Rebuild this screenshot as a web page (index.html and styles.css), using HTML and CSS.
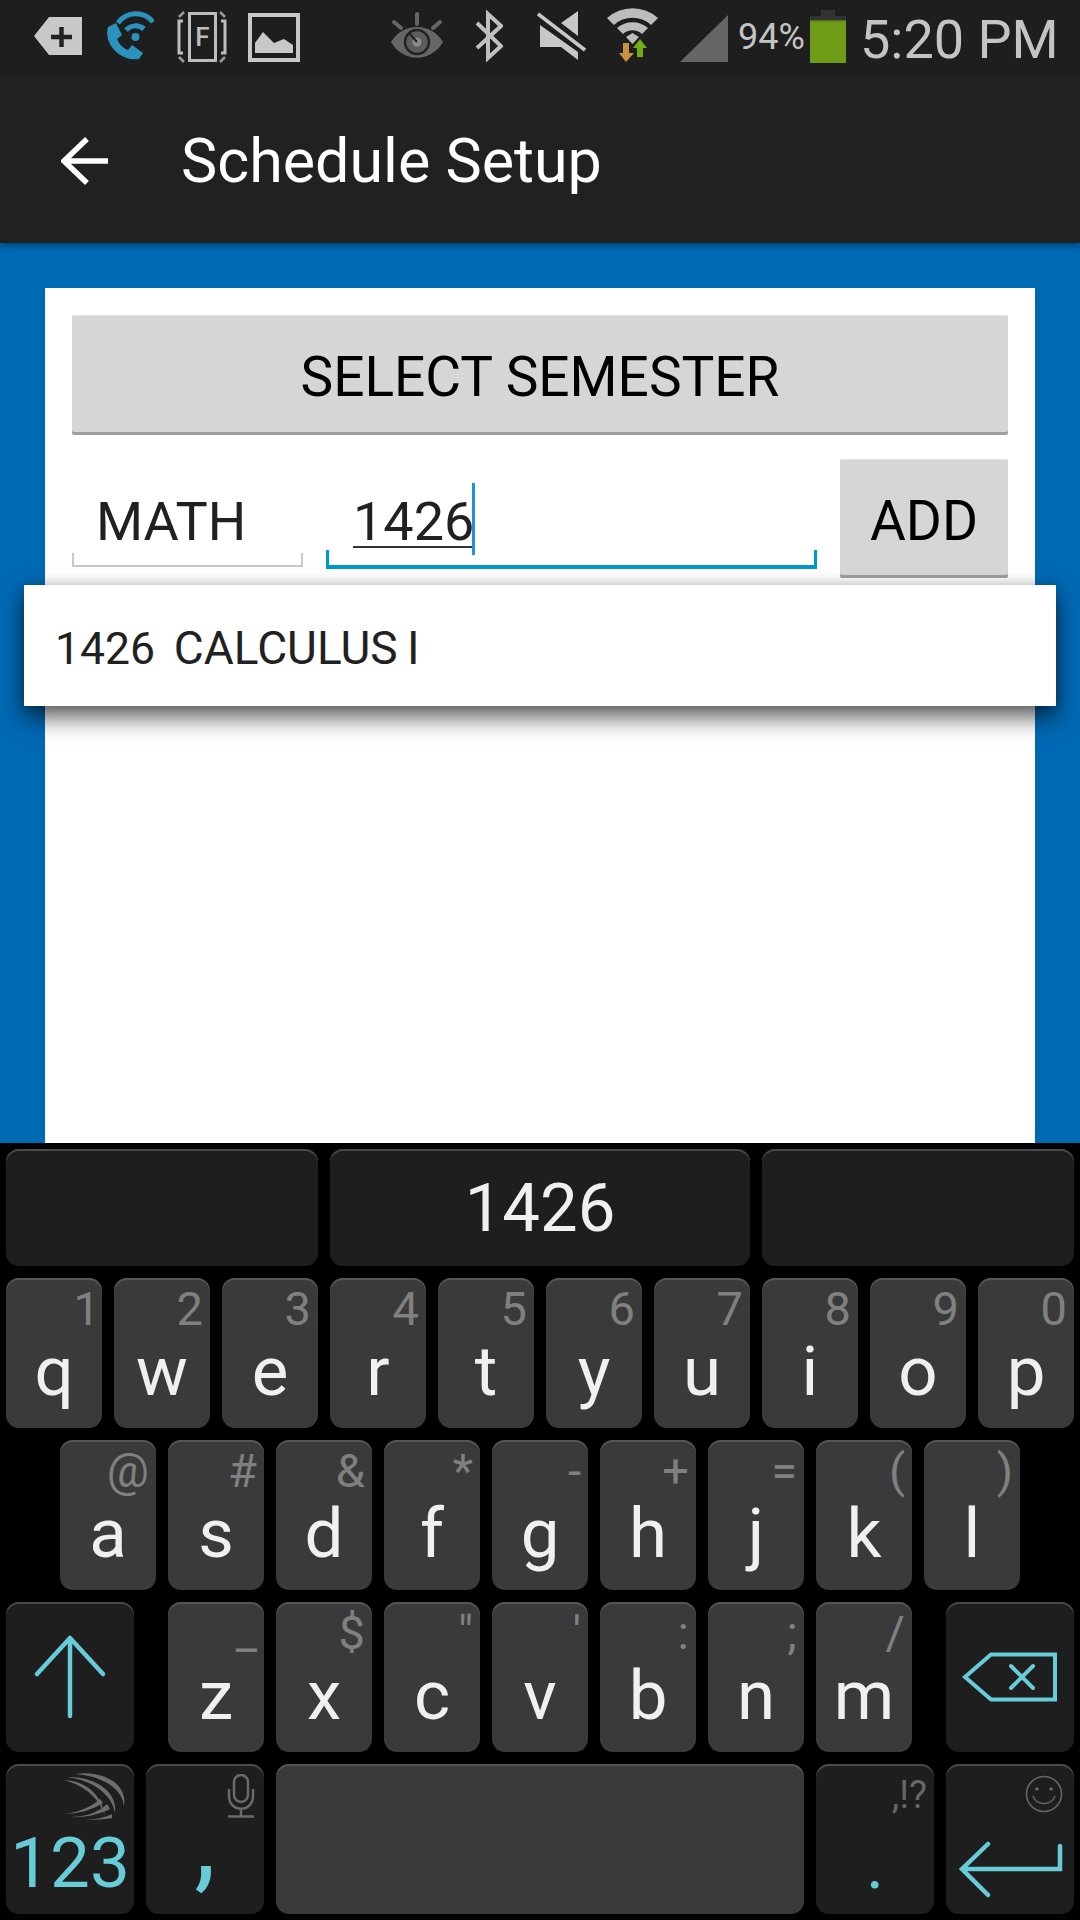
FILE: index.html
```html
<!DOCTYPE html>
<html lang="en">
<head>
    <meta charset="UTF-8">
    <meta name="viewport" content="width=device-width, initial-scale=1.0">
    <title>Schedule Setup</title>
    <link rel="stylesheet" href="styles.css">
</head>
<body>
    <div class="status-bar">
        <svg class="icon icon-tag" width="48" height="75" viewBox="0 0 48 75">
            <polygon points="0,36 15,17 48,17 48,55 15,55" fill="#c8c8c8"/>
            <path d="M17 37h21M27.500 27v20" stroke="#222" stroke-width="4.500" fill="none"/>
        </svg>
        <svg class="icon icon-call" width="49" height="75" viewBox="0 0 49 75">
            <path d="M3 27L11 23L17 35L12 39C14 44 18 48 23 50L27 45L38 53L34 59C18 62-2 46 3 27Z" fill="#2a93bd"/>
            <circle cx="30.500" cy="37" r="4" fill="#2a93bd"/>
            <path d="M13 23A22 22 0 0 1 48 22M21 30A13 13 0 0 1 39 29" stroke="#2a93bd" stroke-width="5" fill="none"/>
        </svg>
        <svg class="icon icon-frame" width="50" height="75" viewBox="0 0 50 75">
            <rect x="12.500" y="13.500" width="26" height="47" fill="none" stroke="#bdbdbd" stroke-width="3"/>
            <text x="25.500" y="46" class="frame-letter">F</text>
            <path d="M6 21H2V53H6M44 21H48V53H44" fill="none" stroke="#bdbdbd" stroke-width="3"/>
            <path d="M2 17L7 12M2 57L7 62M48 17L43 12M48 57L43 62" stroke="#9a9a9a" stroke-width="2.500"/>
        </svg>
        <svg class="icon icon-picture" width="52" height="75" viewBox="0 0 52 75">
            <rect x="2" y="15" width="48" height="45" fill="none" stroke="#c8c8c8" stroke-width="4"/>
            <polygon points="7,53 7,43 15,32 26,43 36,39 45,45 45,53" fill="#c8c8c8"/>
        </svg>
        <svg class="icon icon-eye" width="52" height="75" viewBox="0 0 52 75">
            <path d="M0 42C12 22 40 22 52 42C40 63 12 63 0 42Z" fill="#666"/>
            <circle cx="26" cy="42" r="12" fill="#5c5c5c" stroke="#222" stroke-width="2.500"/>
            <circle cx="26" cy="42" r="4.500" fill="#8a8a8a"/>
            <path d="M26 42L18 33" stroke="#222" stroke-width="2"/>
            <path d="M26 14V24M3 22L10 28M49 22L42 28" stroke="#666" stroke-width="4" stroke-linecap="round"/>
        </svg>
        <svg class="icon icon-bluetooth" width="28" height="75" viewBox="0 0 28 75">
            <polyline points="2,23 26,46 13,58 13,14 26,26 2,48" fill="none" stroke="#c0c0c0" stroke-width="4"/>
        </svg>
        <svg class="icon icon-mute" width="49" height="75" viewBox="0 0 49 75">
            <polygon points="41,11 24,23 41,36" fill="#c8c8c8"/>
            <polygon points="3,25 41,52 41,60 24,47 3,47" fill="#c8c8c8"/>
            <path d="M1 14L48 50" stroke="#c8c8c8" stroke-width="3.500"/>
        </svg>
        <svg class="icon icon-wifi" width="53" height="75" viewBox="0 0 53 75">
            <path d="M1 18A38 38 0 0 1 52 18L45 25A27 27 0 0 0 8 25Z" fill="#bdbdbd"/>
            <path d="M11 28A24 24 0 0 1 42 28L36 34A14 14 0 0 0 17 34Z" fill="#bdbdbd"/>
            <polygon points="20,37 26.500,33 33,37 26.500,44" fill="#bdbdbd"/>
            <polygon points="17,43 23,43 23,53 28,53 20,62 13,53 17,53" fill="#c9913f"/>
            <polygon points="34,39 41,48 37,48 37,57 31,57 31,48 27,48" fill="#71ad0f"/>
        </svg>
        <svg class="icon icon-signal" width="48" height="75" viewBox="0 0 48 75">
            <polygon points="0,62 48,15 48,62" fill="#666"/>
        </svg>
        <span class="battery-pct">94%</span>
        <svg class="icon icon-battery" width="36" height="75" viewBox="0 0 36 75">
            <rect x="11" y="10" width="14" height="6" fill="#333"/>
            <rect x="0" y="16" width="36" height="4" fill="#333"/>
            <rect x="0" y="20" width="36" height="43" fill="#6f9c16"/>
            <rect x="0" y="20" width="36" height="1.500" fill="#55751a"/>
        </svg>
        <span class="clock">5:20 PM</span>
    </div>

    <div class="action-bar">
        <svg class="back-arrow" width="48" height="48" viewBox="0 0 48 48">
            <path d="M47 24H3M26 2L3 24L26 46" fill="none" stroke="#fff" stroke-width="5.500"/>
        </svg>
        <h1 class="title">Schedule Setup</h1>
    </div>

    <div class="content">
        <div class="card">
            <button class="btn btn-wide">SELECT SEMESTER</button>
            <div class="course-row">
                <div class="field field-subject">MATH</div>
                <div class="field field-number"><span class="composing">1426<span class="caret"></span></span></div>
                <button class="btn btn-add">ADD</button>
            </div>
        </div>
        <div class="dropdown"><span class="course-code">1426</span>  CALCULUS I</div>
    </div>

    <div class="keyboard">
        <div class="key-row candidates">
            <div class="candidate candidate-side"></div>
            <div class="candidate candidate-main">1426</div>
            <div class="candidate candidate-side"></div>
        </div>
        <div class="key-row">
            <div class="key">q<span class="hint hint-one">1</span></div>
            <div class="key">w<span class="hint">2</span></div>
            <div class="key">e<span class="hint">3</span></div>
            <div class="key">r<span class="hint">4</span></div>
            <div class="key">t<span class="hint">5</span></div>
            <div class="key">y<span class="hint">6</span></div>
            <div class="key">u<span class="hint">7</span></div>
            <div class="key">i<span class="hint">8</span></div>
            <div class="key">o<span class="hint">9</span></div>
            <div class="key">p<span class="hint">0</span></div>
        </div>
        <div class="key-row row-home">
            <div class="key">a<span class="hint">@</span></div>
            <div class="key">s<span class="hint">#</span></div>
            <div class="key">d<span class="hint">&amp;</span></div>
            <div class="key">f<span class="hint">*</span></div>
            <div class="key">g<span class="hint">-</span></div>
            <div class="key">h<span class="hint">+</span></div>
            <div class="key">j<span class="hint">=</span></div>
            <div class="key">k<span class="hint">(</span></div>
            <div class="key">l<span class="hint">)</span></div>
        </div>
        <div class="key-row">
            <div class="key key-dark key-shift">
                <svg class="key-icon" width="128" height="150" viewBox="0 0 128 150">
                    <path d="M64 114V36M31 72L64 36L97 72" fill="none" stroke="#67cbd8" stroke-width="4.500" stroke-linecap="round" stroke-linejoin="round"/>
                </svg>
            </div>
            <div class="key">z<span class="hint">_</span></div>
            <div class="key">x<span class="hint">$</span></div>
            <div class="key">c<span class="hint">"</span></div>
            <div class="key">v<span class="hint">'</span></div>
            <div class="key">b<span class="hint">:</span></div>
            <div class="key">n<span class="hint">;</span></div>
            <div class="key">m<span class="hint">/</span></div>
            <div class="key key-dark key-back">
                <svg class="key-icon" width="128" height="150" viewBox="0 0 128 150">
                    <path d="M19 75L45 52.500H109V97.500H45Z" fill="none" stroke="#67cbd8" stroke-width="4"/>
                    <path d="M65 64L87 86M87 64L65 86" stroke="#67cbd8" stroke-width="4" stroke-linecap="round"/>
                </svg>
            </div>
        </div>
        <div class="key-row">
            <div class="key key-dark key-shift">
                <svg class="swype" width="90" height="65" viewBox="0 0 90 65">
                    <g fill="#6e6e6e">
                        <path d="M25 10C50 6 78 18 74 42C72 24 52 12 25 10Z"/>
                        <path d="M17 13C42 12 68 26 65 49C62 30 42 16 17 13Z"/>
                        <path d="M13 16C34 16 52 30 55 52C50 34 32 20 13 16Z"/>
                        <path d="M13 50C26 49 40 44 50 35L53 39C42 46 28 50 13 50Z"/>
                        <path d="M20 53C34 53 48 49 57 40L60 45C50 50 36 54 20 53Z"/>
                        <path d="M33 55C45 56 54 54 62 50L62 54C52 56 42 56 33 55Z"/>
                    </g>
                </svg>
                <span class="num-label">123</span>
            </div>
            <div class="key key-dark key-comma">,
                <svg class="mic" width="28" height="44" viewBox="0 0 28 44">
                    <rect x="7" y="1" width="14" height="27" rx="7" fill="none" stroke="#6a6a6a" stroke-width="2.500"/>
                    <path d="M2 15V22C2 39 26 39 26 22V15M14 34V42M1 42.500H27" fill="none" stroke="#6a6a6a" stroke-width="2.500"/>
                </svg>
            </div>
            <div class="key key-space"></div>
            <div class="key key-dark key-period">.<span class="hint hint-punct">,!?</span></div>
            <div class="key key-dark key-enter">
                <svg class="key-icon" width="128" height="150" viewBox="0 0 128 150">
                    <path d="M114 82V105H16M42 80L16 105L42 131" fill="none" stroke="#67cbd8" stroke-width="4.500" stroke-linecap="round"/>
                    <circle cx="98" cy="30" r="17.500" fill="none" stroke="#666" stroke-width="1.500"/>
                    <circle cx="91" cy="25" r="1.800" fill="#666"/>
                    <circle cx="105" cy="25" r="1.800" fill="#666"/>
                    <path d="M87 32C90 42 106 42 109 32" fill="none" stroke="#666" stroke-width="1.500"/>
                </svg>
            </div>
        </div>
    </div>
</body>
</html>
```

FILE: styles.css
```css
* {
    margin: 0;
    padding: 0;
    box-sizing: border-box;
}

body {
    width: 1080px;
    height: 1920px;
    overflow: hidden;
    font-family: Roboto, 'Liberation Sans', sans-serif;
    background: #000;
    display: flex;
    flex-direction: column;
}

/* status bar */
.status-bar {
    height: 75px;
    background: #1e1e1e;
    display: flex;
    align-items: flex-start;
    padding-left: 34px;
    color: #c4c4c4;
}

.icon {
    flex: none;
}

.icon-call { margin-left: 23px; }
.icon-frame { margin-left: 23px; }
.icon-picture { margin-left: 21px; }
.icon-eye { margin-left: 91px; }
.icon-bluetooth { margin-left: 32px; }
.icon-mute { margin-left: 34px; }
.icon-wifi { margin-left: 20px; }
.icon-signal { margin-left: 21px; }
.icon-battery { margin-left: 7px; }

.frame-letter {
    font-size: 26px;
    font-weight: 500;
    fill: #bdbdbd;
    text-anchor: middle;
}

.battery-pct {
    width: 64px;
    margin-left: 10px;
    margin-right: 1px;
    font-size: 36px;
    line-height: 75px;
}

.clock {
    margin-left: 14px;
    font-size: 54px;
    line-height: 80px;
    white-space: nowrap;
}

/* action bar */
.action-bar {
    height: 168px;
    background: #212121;
    display: flex;
    align-items: center;
    padding: 3px 0 0 61px;
    position: relative;
    z-index: 2;
    box-shadow: 0 3px 6px rgba(0, 0, 0, 0.35);
}

.title {
    margin-left: 72px;
    color: #fff;
    font-size: 61px;
    font-weight: 400;
}

/* main content */
.content {
    height: 900px;
    background: #0069b4;
    padding: 45px 45px 0;
    position: relative;
}

.card {
    height: 855px;
    background: #fff;
    padding: 27px 27px 0;
}

.btn {
    display: block;
    border: none;
    background: #d6d6d6;
    color: #000;
    font-family: inherit;
    font-size: 55px;
    padding-top: 4px;
    box-shadow: inset 0 -3px 0 #a0a0a0, inset 0 1px 0 #e0e0e0;
    border-radius: 2px;
}

.btn-wide {
    width: 100%;
    height: 120px;
}

.course-row {
    display: flex;
    gap: 23px;
    margin-top: 24px;
    align-items: flex-start;
}

.btn-add {
    width: 168px;
    height: 119px;
}

.field {
    height: 108px;
    padding-top: 36px;
    font-size: 54px;
    line-height: 54px;
    color: #212121;
    position: relative;
}

.field::after {
    content: '';
    position: absolute;
    left: 0;
    right: 0;
    bottom: 0;
    height: 12px;
    border: 2px solid #c8c8c8;
    border-top: none;
}

.field-subject {
    width: 231px;
    padding-left: 24px;
}

.field-number {
    flex: 1;
    padding-left: 27px;
}

.field-number::after {
    height: 15px;
    border: 3px solid #0099cc;
    border-bottom-width: 4px;
    border-top: none;
    bottom: -2px;
}

.composing {
    display: inline-block;
    height: 53px;
    border-bottom: 2px solid #333;
    position: relative;
}

.caret {
    position: absolute;
    left: 100%;
    top: -12px;
    width: 3px;
    height: 72px;
    margin-left: -2px;
    background: #1e90e8;
}

.dropdown {
    position: absolute;
    left: 24px;
    right: 24px;
    top: 342px;
    height: 121px;
    background: #fff;
    color: #212121;
    padding-left: 31px;
    font-size: 46px;
    word-spacing: -2px;
    line-height: 126px;
    white-space: pre;
    box-shadow: 0 12px 22px rgba(0, 0, 0, 0.6), 0 0 12px rgba(0, 0, 0, 0.2);
}

.course-code {
    font-size: 44.500px;
}

/* keyboard */
.keyboard {
    flex: 1;
    background: #000;
    padding: 6px;
    display: flex;
    flex-direction: column;
    gap: 12px;
}

.key-row {
    display: flex;
    gap: 12px;
    height: 150px;
}

.candidates {
    height: 117px;
}

.row-home {
    padding-left: 54px;
}

.candidate {
    background: #1e1e1e;
    border-radius: 13px;
    box-shadow: inset 0 2px 0 #4a4a4a;
    text-align: center;
    color: #f0f0f0;
    font-size: 67px;
    line-height: 118px;
}

.candidate-side {
    width: 312px;
}

.candidate-main {
    flex: 1;
}

.key {
    width: 96px;
    height: 150px;
    flex: none;
    background: #3a3a3a;
    border-radius: 13px;
    box-shadow: inset 0 2px 0 #565656;
    padding-top: 59px;
    text-align: center;
    color: #f0f0f0;
    font-size: 69px;
    line-height: 69px;
    position: relative;
}

.key-dark {
    background: #1e1e1e;
    box-shadow: inset 0 2px 0 #4a4a4a;
}

.key-shift {
    width: 128px;
    margin-right: 22px;
}

.key-back {
    width: 128px;
    margin-left: 22px;
}

.key-icon,
.swype {
    position: absolute;
    left: 0;
    top: 0;
}

.swype {
    left: 44px;
}

.key-space {
    width: 528px;
    flex: none;
}

.key-comma {
    width: 118px;
    margin-left: -22px;
    padding-top: 22px;
    color: #67cbd8;
    font-size: 110px;
    line-height: 110px;
}

.key-period {
    width: 118px;
    color: #67cbd8;
    padding-top: 66px;
}

.key-enter {
    width: 128px;
}

.num-label {
    color: #67cbd8;
    display: block;
    font-size: 71px;
    line-height: 71px;
    margin-top: 4px;
}

.hint {
    position: absolute;
    top: 7px;
    right: 7px;
    color: #808080;
    font-size: 47px;
    line-height: 47px;
}

.hint-one {
    right: 2px;
}

.hint-punct {
    top: 12px;
    color: #666;
    font-size: 38px;
    line-height: 38px;
}

.mic {
    position: absolute;
    top: 10px;
    right: 9px;
}
```
